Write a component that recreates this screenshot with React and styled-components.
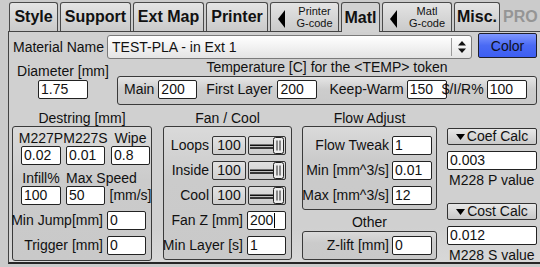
import React from "react";
import styled, { createGlobalStyle } from "styled-components";

const GlobalStyle = createGlobalStyle`
  html, body {
    margin: 0;
    padding: 0;
  }
  body {
    width: 540px;
    height: 267px;
    overflow: hidden;
    background: #cbcbcb;
    font-family: "Liberation Sans", Arial, sans-serif;
    font-size: 14px;
    color: #111;
  }
`;

const tabs = [
  { name: "Style", w: 49 },
  { name: "Support", w: 71 },
  { name: "Ext Map", w: 71 },
  { name: "Printer", w: 62 },
  { name: ["Printer", "G-code"], w: 69, back: true },
  { name: "Matl", w: 39, active: true },
  { name: ["Matl", "G-code"], w: 70, back: true },
  { name: "Misc.", w: 46 },
  { name: "PRO", w: 40, off: true },
];

const tempFields = [
  { label: "Main", value: "200", lead: 0, gap: 4, w: 39 },
  { label: "First Layer", value: "200", lead: 9, gap: 5, w: 40 },
  { label: "Keep-Warm", value: "150", lead: 12, gap: 3, w: 40 },
  { label: "$/I/R%", value: "100", lead: -5, gap: 3, w: 40 },
];

const fans = [
  { label: "Loops", value: "100" },
  { label: "Inside", value: "100" },
  { label: "Cool", value: "100" },
];

const flows = [
  { label: "Flow Tweak", value: "1" },
  { label: "Min [mm^3/s]", value: "0.01" },
  { label: "Max [mm^3/s]", value: "12" },
];

const Page = styled.div`
  width: 540px;
  height: 267px;
  box-sizing: border-box;
  padding-top: 2px;
  overflow: hidden;
`;

const TabBar = styled.div`
  display: flex;
  align-items: flex-start;
  gap: 2px;
  height: 29px;
  padding-left: 9px;
`;

const Tab = styled.div`
  position: relative;
  z-index: ${(p) => (p.$active ? 1 : 0)};
  box-sizing: border-box;
  flex: none;
  width: ${(p) => p.$w}px;
  height: ${(p) => (p.$active ? 30 : 29)}px;
  display: flex;
  align-items: center;
  justify-content: ${(p) => (p.$back || p.$off ? "flex-start" : "center")};
  padding-left: ${(p) => (p.$back ? 7 : 0)}px;
  border: 1px solid ${(p) => (p.$off ? "transparent" : "#4a4a4a")};
  border-bottom: none;
  border-radius: 3px 3px 0 0;
  background: ${(p) =>
    p.$active
      ? "#d2d2d2"
      : p.$off
      ? "transparent"
      : "linear-gradient(#e4e4e4, #cacaca)"};
  color: ${(p) => (p.$off ? "#959595" : "#111")};
  font-size: 16px;
  font-weight: bold;
  white-space: nowrap;
`;

const BackArrow = styled.svg`
  flex: none;
  margin-top: 4px;
`;

const TabSmall = styled.div`
  flex: 1;
  margin-left: 6px;
  font-size: 11px;
  font-weight: normal;
  line-height: 12px;
  text-align: center;
`;

const Panel = styled.div`
  box-sizing: border-box;
  height: 233px;
  margin-left: 8px;
  padding-left: 3px;
  border: 1px solid #444;
  border-right: none;
  border-bottom: 2px solid #262626;
  background: linear-gradient(#d0d0d0, #d0d0d0 85%, #d8d8d8);
`;

const NameRow = styled.div`
  display: flex;
  align-items: flex-start;
  height: 27px;
`;

const NameLabel = styled.div`
  margin: 7px 0 0 1px;
  line-height: 16px;
  white-space: nowrap;
`;

const Select = styled.div`
  box-sizing: border-box;
  display: flex;
  align-items: center;
  width: 365px;
  height: 24px;
  margin: 3px 0 0 3px;
  border: 1px solid #7a7a7a;
  border-radius: 3px;
  background: linear-gradient(#ffffff, #e4e4e4);
`;

const SelectText = styled.div`
  flex: 1;
  padding-left: 4px;
  white-space: nowrap;
`;

const SelectDivider = styled.div`
  width: 1px;
  height: 18px;
  background: #9a9a9a;
`;

const SelectArrows = styled.div`
  display: flex;
  justify-content: center;
  width: 19px;
`;

const ColorButton = styled.div`
  box-sizing: border-box;
  display: flex;
  align-items: center;
  justify-content: center;
  width: 59px;
  height: 25px;
  margin: 1px 0 0 6px;
  border: 1px solid #1e1e2a;
  border-radius: 2px;
  background: linear-gradient(#7f97ff, #4a6af4 50%, #3d5ef2);
  color: #101020;
`;

const TopRow = styled.div`
  display: flex;
  align-items: flex-start;
`;

const DiameterCol = styled.div`
  display: flex;
  flex-direction: column;
  align-items: center;
  width: 102px;
  flex: none;
`;

const Caption = styled.div`
  margin-top: ${(p) => p.$mt || 0}px;
  line-height: 16px;
  white-space: nowrap;
`;

const TempGroup = styled.div`
  display: flex;
  flex-direction: column;
  align-items: center;
  width: 420px;
  margin-left: 3px;
  flex: none;
`;

const TempBox = styled.div`
  box-sizing: border-box;
  display: flex;
  align-items: flex-start;
  align-self: stretch;
  height: 29px;
  margin-top: 1px;
  padding: 3px 0 0 6px;
  border: 1px solid #3a3a3a;
  border-radius: 3px;
  background: linear-gradient(#e6e6e6, #cdcdcd 45%, #c9c9c9);
`;

const InlineLabel = styled.div`
  margin-left: ${(p) => p.$lead || 0}px;
  margin-right: ${(p) => p.$gap || 0}px;
  line-height: 19px;
  white-space: nowrap;
`;

const Field = styled.div`
  box-sizing: border-box;
  flex: none;
  width: ${(p) => p.$w || 39}px;
  height: 19px;
  margin-top: ${(p) => p.$mt || 0}px;
  padding-left: 2px;
  border: 1px solid #222;
  border-radius: 2px;
  background: #fff;
  line-height: 17px;
  white-space: nowrap;
  overflow: hidden;
`;

const Caret = styled.span`
  display: inline-block;
  width: 1px;
  height: 15px;
  margin-left: 1px;
  vertical-align: -3px;
  background: #000;
`;

const BottomRow = styled.div`
  display: flex;
  align-items: flex-start;
  margin-top: 1px;
`;

const Column = styled.div`
  display: flex;
  flex-direction: column;
  flex: none;
  width: ${(p) => p.$w}px;
  margin-left: ${(p) => p.$ml || 0}px;
  padding-top: ${(p) => p.$pt || 0}px;
`;

const GroupTitle = styled.div`
  box-sizing: border-box;
  height: ${(p) => p.$h || 20}px;
  padding-top: 4px;
  line-height: 16px;
  text-align: center;
  white-space: nowrap;
`;

const GroupBox = styled.div`
  box-sizing: border-box;
  display: flex;
  flex-direction: column;
  gap: 6px;
  height: ${(p) => (p.$h ? `${p.$h}px` : "auto")};
  padding: ${(p) => p.$pad};
  border: 1px solid #3a3a3a;
  border-radius: 3px;
  background: linear-gradient(#dadada, #cbcbcb 40%, #c9c9c9);
`;

const DestringGrid = styled.div`
  display: grid;
  grid-template-columns: 45px 45px 39px;
  grid-template-rows: 15px 19px 21px 19px;
  padding-left: 4px;
`;

const HeadCell = styled.div`
  display: flex;
  justify-content: ${(p) => (p.$left ? "flex-start" : "center")};
  align-self: end;
  width: ${(p) => p.$w || 39}px;
  grid-column: ${(p) => p.$span || "auto"};
  line-height: ${(p) => p.$lh || 15}px;
  white-space: nowrap;
`;

const Unit = styled.div`
  display: flex;
  justify-content: center;
  line-height: 19px;
  white-space: nowrap;
`;

const FieldRow = styled.div`
  display: flex;
  justify-content: flex-end;
  align-items: flex-start;
`;

const Readout = styled.div`
  box-sizing: border-box;
  width: 34px;
  height: 19px;
  margin-right: 2px;
  border: 1px solid #333;
  border-radius: 2px;
  background: linear-gradient(#e2e2e2, #cfcfcf);
  line-height: 17px;
  text-align: center;
`;

const SliderBox = styled.div`
  box-sizing: border-box;
  width: 38px;
  height: 19px;
  border: 1px solid #333;
  border-radius: 2px;
  background: linear-gradient(#e0e0e0, #cbcbcb);
  line-height: 0;
`;

const CalcButton = styled.div`
  box-sizing: border-box;
  display: flex;
  align-items: center;
  justify-content: center;
  gap: 2px;
  height: 17px;
  margin-top: ${(p) => p.$mt || 0}px;
  border: 1px solid #333;
  border-radius: 2px;
  background: linear-gradient(#e8e8e8, #c8c8c8);
  line-height: 15px;
  white-space: nowrap;
`;

const CalcNote = styled.div`
  margin-top: 2px;
  padding-left: 2px;
  line-height: 16px;
  white-space: nowrap;
`;

const Slider = () => (
  <SliderBox>
    <svg width="36" height="17" viewBox="0 0 36 17">
      <rect x="1" y="7.5" width="25" height="1.6" fill="#111" />
      <rect x="1" y="10.2" width="25" height="1.6" fill="#111" />
      <rect x="24.5" y="0.5" width="10" height="16" rx="2" fill="#ededed" stroke="#222" />
      <line x1="28" y1="3.5" x2="28" y2="13.5" stroke="#222" />
      <line x1="31" y1="3.5" x2="31" y2="13.5" stroke="#222" />
    </svg>
  </SliderBox>
);

const DownTri = () => (
  <svg width="9" height="6" viewBox="0 0 9 6">
    <path d="M0 0 L9 0 L4.5 6 Z" fill="#000" />
  </svg>
);

const App = () => {
  return (
    <Page>
      <GlobalStyle />
      <TabBar>
        {tabs.map((t) => (
          <Tab key={[].concat(t.name).join("-")} $w={t.w} $active={t.active} $back={t.back} $off={t.off}>
            {t.back ? (
              <>
                <BackArrow width="7" height="18" viewBox="0 0 7 18">
                  <path d="M7 0 L0 9 L7 18 Z" fill="#000" />
                </BackArrow>
                <TabSmall>
                  {t.name[0]}
                  <br />
                  {t.name[1]}
                </TabSmall>
              </>
            ) : (
              t.name
            )}
          </Tab>
        ))}
      </TabBar>

      <Panel>
        <NameRow>
          <NameLabel>Material Name</NameLabel>
          <Select>
            <SelectText>TEST-PLA - in Ext 1</SelectText>
            <SelectDivider />
            <SelectArrows>
              <svg width="8" height="14" viewBox="0 0 8 14">
                <path d="M0 5.5 L4 1 L8 5.5 Z" fill="#111" />
                <path d="M0 8.5 L4 13 L8 8.5 Z" fill="#111" />
              </svg>
            </SelectArrows>
          </Select>
          <ColorButton>Color</ColorButton>
        </NameRow>

        <TopRow>
          <DiameterCol>
            <Caption $mt={4}>Diameter [mm]</Caption>
            <Field $w={50} $mt={1}>1.75</Field>
          </DiameterCol>
          <TempGroup>
            <Caption>Temperature [C] for the &lt;TEMP&gt; token</Caption>
            <TempBox>
              {tempFields.map((f) => (
                <React.Fragment key={f.label}>
                  <InlineLabel $lead={f.lead} $gap={f.gap}>
                    {f.label}
                  </InlineLabel>
                  <Field $w={f.w}>{f.value}</Field>
                </React.Fragment>
              ))}
            </TempBox>
          </TempGroup>
        </TopRow>

        <BottomRow>
          <Column $w={140}>
            <GroupTitle>Destring [mm]</GroupTitle>
            <GroupBox $h={135} $pad="4px 5px 0 4px">
              <DestringGrid>
                <HeadCell $w={40}>M227P</HeadCell>
                <HeadCell>M227S</HeadCell>
                <HeadCell>Wipe</HeadCell>
                <Field $w={40}>0.02</Field>
                <Field>0.01</Field>
                <Field>0.8</Field>
                <HeadCell $w={40} $lh={16}>Infill%</HeadCell>
                <HeadCell $span="2 / 4" $left $lh={16}>Max Speed</HeadCell>
                <Field $w={40}>100</Field>
                <Field>50</Field>
                <Unit>[mm/s]</Unit>
              </DestringGrid>
              <FieldRow>
                <InlineLabel $gap={4}>Min Jump[mm]</InlineLabel>
                <Field>0</Field>
              </FieldRow>
              <FieldRow>
                <InlineLabel $gap={4}>Trigger [mm]</InlineLabel>
                <Field>0</Field>
              </FieldRow>
            </GroupBox>
          </Column>

          <Column $w={129} $ml={11}>
            <GroupTitle>Fan / Cool</GroupTitle>
            <GroupBox $pad="9px 5px 4px 0">
              {fans.map((f) => (
                <FieldRow key={f.label}>
                  <InlineLabel $gap={3}>{f.label}</InlineLabel>
                  <Readout>{f.value}</Readout>
                  <Slider />
                </FieldRow>
              ))}
              <FieldRow>
                <InlineLabel $gap={4}>Fan Z [mm]</InlineLabel>
                <Field>
                  200
                  <Caret />
                </Field>
              </FieldRow>
              <FieldRow>
                <InlineLabel $gap={4}>Min Layer [s]</InlineLabel>
                <Field>1</Field>
              </FieldRow>
            </GroupBox>
          </Column>

          <Column $w={135} $ml={10}>
            <GroupTitle>Flow Adjust</GroupTitle>
            <GroupBox $pad="9px 4px 4px 0">
              {flows.map((f) => (
                <FieldRow key={f.label}>
                  <InlineLabel $gap={3}>{f.label}</InlineLabel>
                  <Field $w={40}>{f.value}</Field>
                </FieldRow>
              ))}
            </GroupBox>
            <GroupTitle $h={21}>Other</GroupTitle>
            <GroupBox $pad="4px 4px 4px 0">
              <FieldRow>
                <InlineLabel $gap={3}>Z-lift [mm]</InlineLabel>
                <Field $w={40}>0</Field>
              </FieldRow>
            </GroupBox>
          </Column>

          <Column $w={90} $ml={10} $pt={22}>
            <CalcButton>
              <DownTri />
              Coef Calc
            </CalcButton>
            <Field $w={90} $mt={6}>0.003</Field>
            <CalcNote>M228 P value</CalcNote>
            <CalcButton $mt={15}>
              <DownTri />
              Cost Calc
            </CalcButton>
            <Field $w={90} $mt={6}>0.012</Field>
            <CalcNote>M228 S value</CalcNote>
          </Column>
        </BottomRow>
      </Panel>
    </Page>
  );
};

export default App;
